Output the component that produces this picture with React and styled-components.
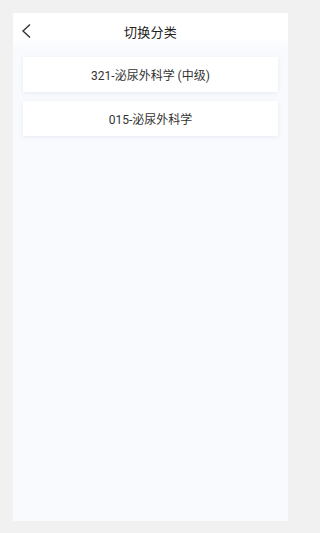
import React from "react";
import styled, { createGlobalStyle } from "styled-components";

const GlobalStyle = createGlobalStyle`
  html, body {
    margin: 0;
    padding: 0;
    background: #f1f1f1;
    font-family: Roboto, "Noto Sans CJK SC", sans-serif;
  }
`;

const Page = styled.div`
  width: 300px;
  height: 533px;
  padding: 13px 12px 12px 13px;
  box-sizing: border-box;
  display: flex;
`;

const Panel = styled.div`
  flex: 1;
  display: flex;
  flex-direction: column;
  background: #f8fafd;
`;

const Header = styled.div`
  height: 36px;
  display: flex;
  align-items: center;
  justify-content: center;
  position: relative;
  background: linear-gradient(#ffffff 70%, #f8fafd);
`;

const Back = styled.button`
  position: absolute;
  left: 8px;
  top: 10px;
  padding: 0;
  border: 0;
  background: none;
  display: flex;
`;

const Title = styled.h1`
  margin: 0;
  font-size: 13px;
  font-weight: 400;
  color: #222;
  letter-spacing: 0.3px;
`;

const List = styled.div`
  display: flex;
  flex-direction: column;
  gap: 9px;
  padding: 8px 10px 0;
`;

const Card = styled.div`
  height: 35px;
  display: flex;
  align-items: center;
  justify-content: center;
  background: #fff;
  box-shadow: 0 1px 4px rgba(200, 210, 230, 0.35);
  font-size: 12px;
  color: #333;
`;

const categories = ["321-泌尿外科学 (中级)", "015-泌尿外科学"];

export default function App() {
  return (
    <>
      <GlobalStyle />
      <Page>
        <Panel>
          <Header>
            <Back aria-label="返回">
              <svg width="11" height="16" viewBox="0 0 11 16">
                <path
                  d="M9 1.5 L2 8 L9 14.5"
                  fill="none"
                  stroke="#333"
                  strokeWidth="1.4"
                />
              </svg>
            </Back>
            <Title>切换分类</Title>
          </Header>
          <List>
            {categories.map((c) => (
              <Card key={c}>{c}</Card>
            ))}
          </List>
        </Panel>
      </Page>
    </>
  );
}
